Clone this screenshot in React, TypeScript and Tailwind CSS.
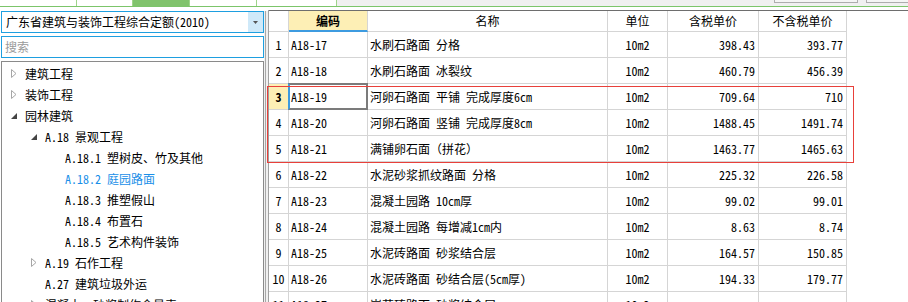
import React from "react";

type TreeItem = {
  level: 0 | 1 | 2;
  text: string;
  state?: "collapsed" | "expanded";
  selected?: boolean;
};

const treeItems: TreeItem[] = [
  { level: 0, text: "建筑工程", state: "collapsed" },
  { level: 0, text: "装饰工程", state: "collapsed" },
  { level: 0, text: "园林建筑", state: "expanded" },
  { level: 1, text: "A.18 景观工程", state: "expanded" },
  { level: 2, text: "A.18.1 塑树皮、竹及其他" },
  { level: 2, text: "A.18.2 庭园路面", selected: true },
  { level: 2, text: "A.18.3 推塑假山" },
  { level: 2, text: "A.18.4 布置石" },
  { level: 2, text: "A.18.5 艺术构件装饰" },
  { level: 1, text: "A.19 石作工程", state: "collapsed" },
  { level: 1, text: "A.27 建筑垃圾外运" },
  { level: 1, text: "混凝土、砂浆制作含量表", state: "collapsed" },
];

const rows = [
  ["1", "A18-17", "水刷石路面 分格", "10m2", "398.43", "393.77"],
  ["2", "A18-18", "水刷石路面 冰裂纹", "10m2", "460.79", "456.39"],
  ["3", "A18-19", "河卵石路面 平铺 完成厚度6cm", "10m2", "709.64", "710"],
  ["4", "A18-20", "河卵石路面 竖铺 完成厚度8cm", "10m2", "1488.45", "1491.74"],
  ["5", "A18-21", "满铺卵石面（拼花）", "10m2", "1463.77", "1465.63"],
  ["6", "A18-22", "水泥砂浆抓纹路面 分格", "10m2", "225.32", "226.58"],
  ["7", "A18-23", "混凝土园路 10cm厚", "10m2", "99.02", "99.01"],
  ["8", "A18-24", "混凝土园路 每增减1cm内", "10m2", "8.63", "8.74"],
  ["9", "A18-25", "水泥砖路面 砂浆结合层", "10m2", "164.57", "150.85"],
  ["10", "A18-26", "水泥砖路面 砂结合层(5cm厚)", "10m2", "194.33", "179.77"],
  ["11", "A18-27", "嵌草砖路面 砂浆结合层", "10m2", "", ""],
];

const levelPad = ["pl-[8px]", "pl-[28px]", "pl-[48px]"];

function Arrow({ state }: { state?: "collapsed" | "expanded" }) {
  if (state === "collapsed") {
    return (
      <svg width="6" height="9" viewBox="0 0 6 9" className="ml-[1px]">
        <polygon points="0.5,0.5 5,4.5 0.5,8.5" fill="#fff" stroke="#a6a6a6" strokeWidth="1" />
      </svg>
    );
  }
  if (state === "expanded") {
    return (
      <svg width="6" height="6" viewBox="0 0 6 6" className="ml-[1px] mt-[1px]">
        <polygon points="6,0 6,6 0,6" fill="#444" />
      </svg>
    );
  }
  return null;
}

export default function App() {
  return (
    <div className="relative w-[908px] h-[302px] overflow-hidden bg-white text-[12px] text-black font-['Noto_Sans_Mono_CJK_SC','Noto_Sans_CJK_SC',sans-serif]">
      {/* top tab strip */}
      <div className="flex h-[6px] bg-[#f0f0f0]">
        <div className="w-[77px] bg-white border-r border-[#9fd48b]" />
        <div className="w-[56px] bg-white border-r border-[#9fd48b]" />
        <div className="w-[56px] bg-[#80c36c]" />
        <div className="w-[68px] bg-white border-x border-[#9fd48b]" />
        <div className="w-[80px] bg-white border-r border-[#9fd48b]" />
        <div className="flex-1" />
        <div className="w-[84px] h-[3px] bg-[#f5f5f5] border border-t-0 border-[#adadad]" />
        <div className="w-[42px] h-[3px] ml-[8px] bg-[#f5f5f5] border border-t-0 border-r-0 border-[#adadad]" />
      </div>
      <div className="h-px bg-[#7cc56a]" />
      <div className="h-[4px] bg-white" />

      <div className="flex h-[291px]">
        {/* left panel */}
        <div className="w-[264px] flex flex-col pl-px">
          <div className="h-[22px] w-[263px] flex border border-[#1e9fe0]">
            <div className="flex-1 flex items-center pl-[4px] whitespace-nowrap">
              广东省建筑与装饰工程综合定额(2010)
            </div>
            <div className="w-[15px] bg-[#cfe9f9] flex items-center justify-center">
              <svg width="5" height="3" viewBox="0 0 5 3">
                <polygon points="0,0 5,0 2.5,3" fill="#555" />
              </svg>
            </div>
          </div>
          <div className="mt-[3px] h-[22px] w-[263px] flex items-center pl-[3px] border border-[#1e9fe0] text-[#9a9a9a]">
            搜索
          </div>
          <div className="mt-[3px] flex-1 w-[263px] border border-b-0 border-[#8a8a8a] pt-px overflow-hidden">
            {treeItems.map((it, i) => (
              <div key={i} className={`h-[21px] flex items-center whitespace-nowrap ${levelPad[it.level]}`}>
                <div className="w-[15px] flex items-center">
                  <Arrow state={it.state} />
                </div>
                <span className={it.selected ? "text-[#1a8fe8]" : ""}>{it.text}</span>
              </div>
            ))}
          </div>
        </div>

        {/* splitter */}
        <div className="w-[4px] bg-[#f0f0f0] flex">
          <div className="w-px ml-px bg-[#a8a8a8]" />
        </div>

        {/* table */}
        <div className="flex-1 border-l border-[#a0a0a0] -mt-px">
          <div className="border-t border-[#6e6e6e]">
            <div className="grid grid-cols-[20px_79px_240px_60px_91px_88px] h-[21px]">
              <div className="border-r border-b border-[#d5d5d5]" />
              <div className="flex items-center justify-center font-bold bg-[#fdefb5] border-r border-r-[#d5d5d5] border-b-2 border-b-[#3d9be0]">
                编码
              </div>
              <div className="flex items-center justify-center border-r border-b border-[#d5d5d5]">名称</div>
              <div className="flex items-center justify-center border-r border-b border-[#d5d5d5]">单位</div>
              <div className="flex items-center justify-center border-r border-b border-[#d5d5d5]">含税单价</div>
              <div className="flex items-center justify-center border-r border-b border-[#d5d5d5]">不含税单价</div>
            </div>
            {rows.map((r) => {
              const sel = r[0] === "3";
              return (
                <div key={r[0]} className="grid grid-cols-[20px_79px_240px_60px_91px_88px] h-[26px]">
                  <div
                    className={`flex items-center justify-center border-r border-b border-[#d5d5d5] ${
                      sel ? "bg-[#fdefb5] font-bold" : ""
                    }`}
                  >
                    {r[0]}
                  </div>
                  <div className="relative flex items-center pl-[2px] border-r border-b border-[#d5d5d5]">
                    {r[1]}
                    {sel && (
                      <div className="absolute -left-px -top-px right-[-1px] bottom-[-1px] border-2 border-[#7b7b7b] border-l-[#3d9be0]" />
                    )}
                  </div>
                  <div className="flex items-center pl-[2px] whitespace-nowrap border-r border-b border-[#d5d5d5]">{r[2]}</div>
                  <div className="flex items-center justify-center border-r border-b border-[#d5d5d5]">{r[3]}</div>
                  <div className="flex items-center justify-end pr-[3px] border-r border-b border-[#d5d5d5]">{r[4]}</div>
                  <div className="flex items-center justify-end pr-[3px] border-r border-b border-[#d5d5d5]">{r[5]}</div>
                </div>
              );
            })}
          </div>
        </div>
      </div>

      {/* red annotation box */}
      <div className="absolute left-[267px] top-[86px] w-[587px] h-[77px] border border-[#e8403a] pointer-events-none" />
    </div>
  );
}
